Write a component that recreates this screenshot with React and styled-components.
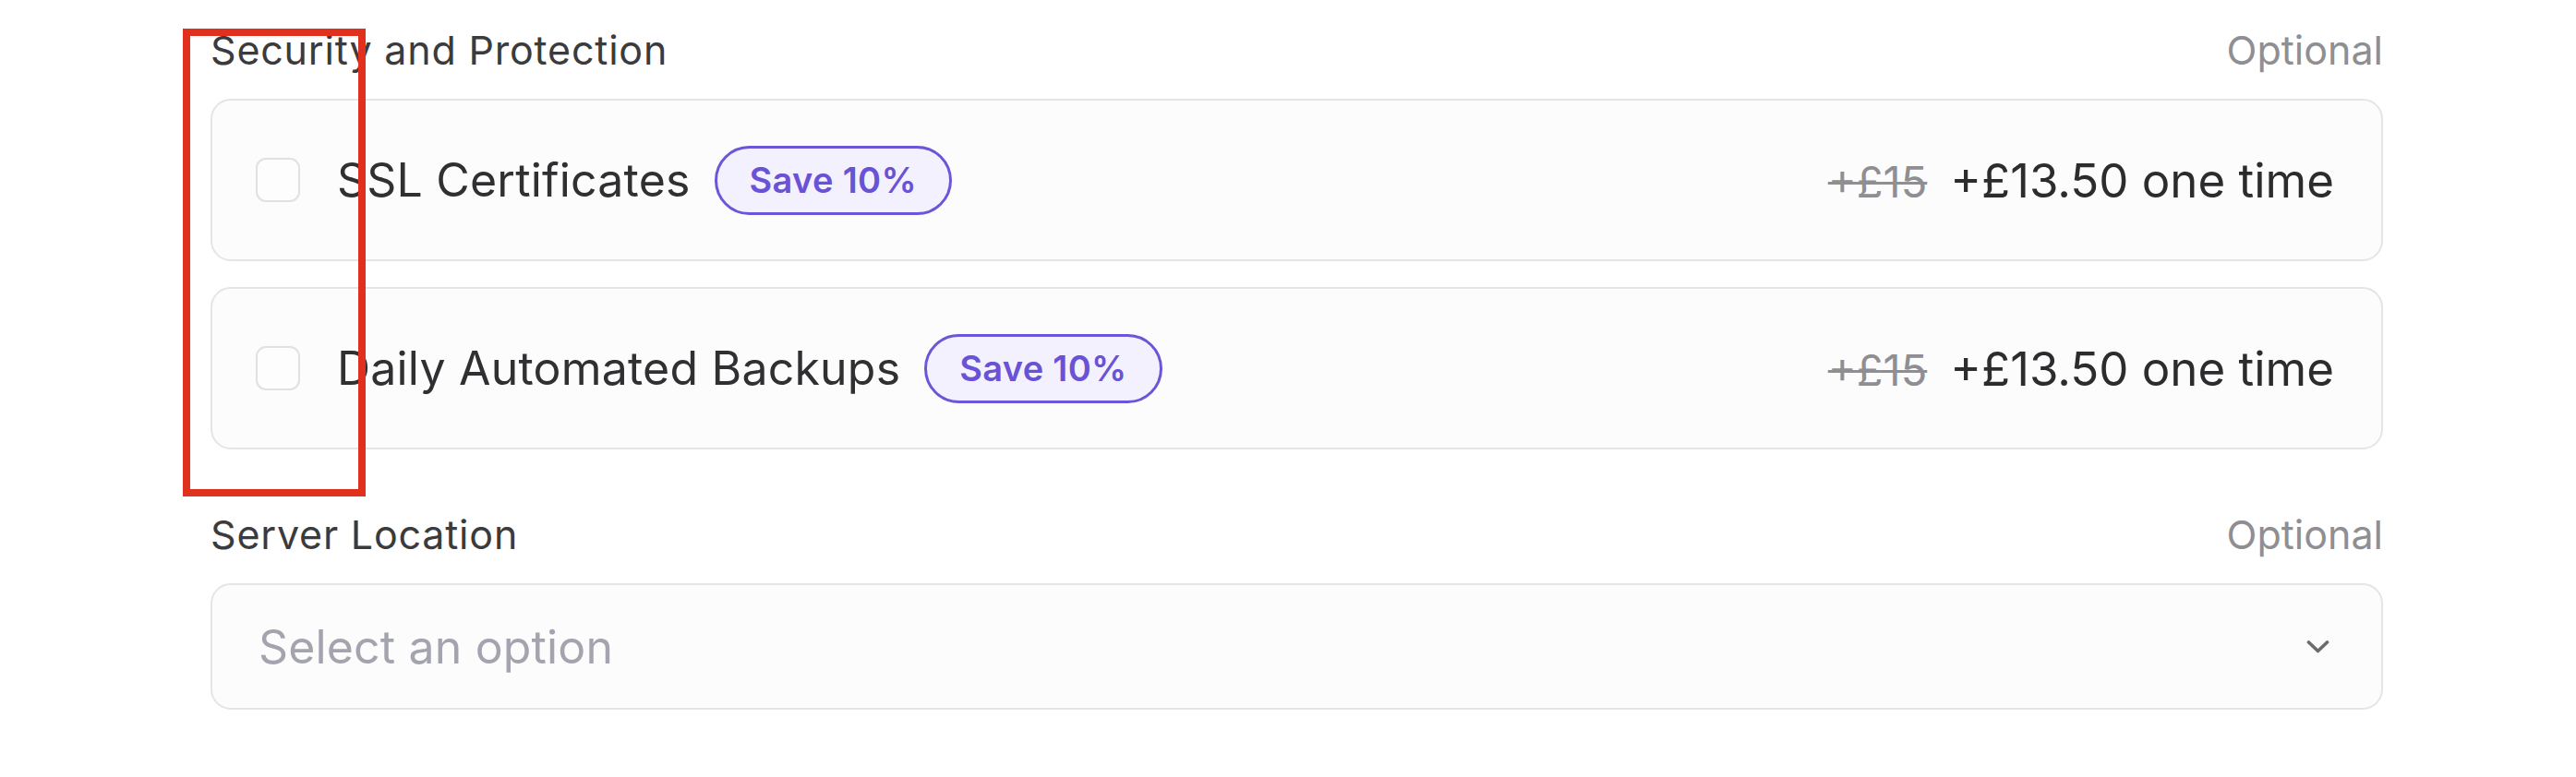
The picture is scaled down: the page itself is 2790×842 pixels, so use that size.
import React from "react";
import styled, { createGlobalStyle } from "styled-components";

const GlobalStyle = createGlobalStyle`
  html, body {
    margin: 0;
    padding: 0;
    background: #ffffff;
  }
  body {
    font-family: Inter, "Noto Sans", "Liberation Sans", sans-serif;
    color: #333333;
    -webkit-font-smoothing: antialiased;
  }
`;

const Page = styled.div`
  position: relative;
  width: 2790px;
  height: 842px;
  box-sizing: border-box;
  padding: 28px 209px 0 228px;
  display: flex;
  flex-direction: column;
`;

const Section = styled.section`
  display: flex;
  flex-direction: column;
  margin-top: ${(p) => p.$offset || 0}px;
`;

const FieldHeader = styled.div`
  display: flex;
  justify-content: space-between;
  align-items: baseline;
  height: 52px;
  line-height: 52px;
  margin-bottom: 27px;
`;

const FieldLabel = styled.span`
  font-size: 43px;
  font-weight: 400;
  color: #3b3b3d;
  letter-spacing: 0.8px;
`;

const Hint = styled.span`
  font-size: 43px;
  font-weight: 400;
  color: #8e8e93;
`;

const CardList = styled.div`
  display: flex;
  flex-direction: column;
  gap: 28px;
`;

const OptionCard = styled.label`
  display: flex;
  align-items: center;
  height: 176px;
  box-sizing: border-box;
  padding: 0 51px 0 47px;
  border: 2.5px solid #e4e4e9;
  border-radius: 22px;
  background: #fcfcfd;
`;

const Checkbox = styled.span`
  flex: none;
  width: 48px;
  height: 48px;
  box-sizing: border-box;
  border: 2.5px solid #e0e0e6;
  border-radius: 11px;
  background: #fdfdfe;
  margin-right: 40px;
`;

const OptionName = styled.span`
  font-size: 50px;
  font-weight: 400;
  color: #303033;
  letter-spacing: 0.2px;
`;

const Badge = styled.span`
  display: inline-flex;
  align-items: center;
  justify-content: center;
  box-sizing: border-box;
  height: 75px;
  padding: 0 35px;
  margin-left: 26px;
  border: 3.5px solid #6a56d8;
  border-radius: 40px;
  background: #f4f1fe;
  color: #6a52d6;
  font-size: 38px;
  font-weight: 600;
  letter-spacing: 0.3px;
`;

const PriceGroup = styled.div`
  margin-left: auto;
  display: flex;
  align-items: baseline;
  gap: 25px;
`;

const OldPrice = styled.s`
  font-size: 47px;
  color: #8f8f93;
  text-decoration-thickness: 3px;
`;

const Price = styled.span`
  font-size: 51px;
  font-weight: 400;
  color: #2c2c2f;
`;

const SelectBox = styled.div`
  display: flex;
  align-items: center;
  justify-content: space-between;
  height: 137px;
  box-sizing: border-box;
  padding: 0 56px 0 50px;
  border: 2.5px solid #e4e4e9;
  border-radius: 22px;
  background: #fcfcfd;
`;

const Placeholder = styled.span`
  font-size: 50px;
  color: #a4a4ae;
  letter-spacing: 0.15px;
`;

const Annotation = styled.div`
  position: absolute;
  left: 198px;
  top: 31px;
  width: 198px;
  height: 507px;
  box-sizing: border-box;
  border: 8.5px solid #e0301e;
  pointer-events: none;
`;

const Chevron = () => (
  <svg width="25" height="16" viewBox="0 0 25 16" aria-hidden="true">
    <polyline
      points="2.5,3 12.5,12.5 22.5,3"
      fill="none"
      stroke="#6b6b70"
      strokeWidth="3.6"
      strokeLinecap="round"
      strokeLinejoin="round"
    />
  </svg>
);

const options = [
  { name: "SSL Certificates", old: "+£15", price: "+£13.50 one time" },
  { name: "Daily Automated Backups", old: "+£15", price: "+£13.50 one time" },
];

export default function App() {
  return (
    <>
      <GlobalStyle />
      <Page>
        <Section>
          <FieldHeader>
            <FieldLabel>Security and Protection</FieldLabel>
            <Hint>Optional</Hint>
          </FieldHeader>
          <CardList>
            {options.map((o) => (
              <OptionCard key={o.name}>
                <Checkbox />
                <OptionName>{o.name}</OptionName>
                <Badge>Save 10%</Badge>
                <PriceGroup>
                  <OldPrice>{o.old}</OldPrice>
                  <Price>{o.price}</Price>
                </PriceGroup>
              </OptionCard>
            ))}
          </CardList>
        </Section>
        <Section $offset={66}>
          <FieldHeader>
            <FieldLabel>Server Location</FieldLabel>
            <Hint>Optional</Hint>
          </FieldHeader>
          <SelectBox>
            <Placeholder>Select an option</Placeholder>
            <Chevron />
          </SelectBox>
        </Section>
        <Annotation />
      </Page>
    </>
  );
}
